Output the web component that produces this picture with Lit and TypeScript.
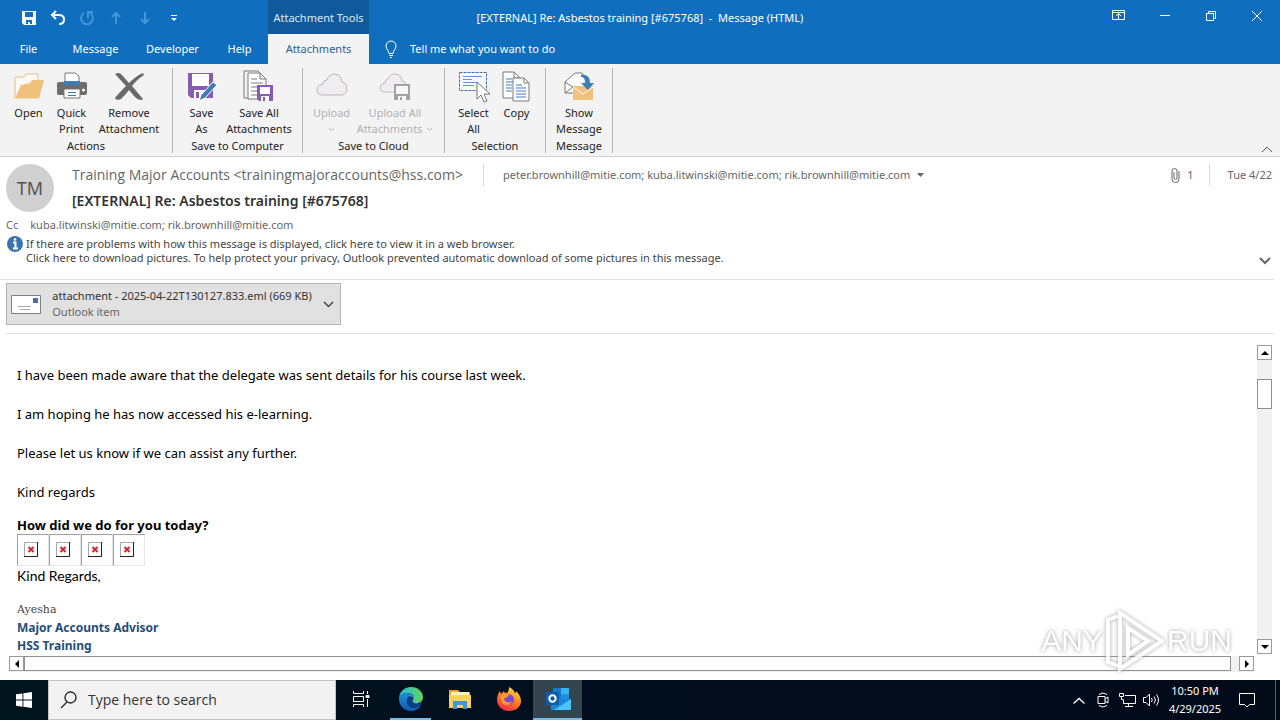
import { LitElement, html, svg, css, nothing } from "lit";
import { customElement } from "lit/decorators.js";

const page = svg`<path d="M1 1h11l6 6v20H1z" fill="#fff" stroke="#7a7a7a"/><path d="M12 1v6h6" fill="none" stroke="#7a7a7a"/>`;

const icons: Record<string, unknown> = {
  open: svg`<path d="M2 28V7h9l2-3h12v9" fill="#fdf9f2" stroke="#e6c08a"/><path d="M2 28.500 8 15l9-2 2-3h12l-5 18.500z" fill="#f0c27b"/>`,
  print: svg`<path d="M3 12h26q2 0 2 2v9q0 2-2 2H3q-2 0-2-2v-9q0-2 2-2z" fill="#6d6d6d"/><path d="M9 3h10l4 3v8H9z" fill="#fff" stroke="#777"/><path d="M8 11h16v4H8z" fill="#3e7cb8"/><path d="M8 19h16v9H8z" fill="#fff" stroke="#777"/><path d="M12 22.500h8M12 25.500h8" stroke="#3e7cb8"/><circle cx="27.500" cy="20" r="1.500" fill="#fff"/>`,
  remove: svg`<path d="M2 4c3-2 5-1 7 1l7 8c4-4 9-8 14-10l1 2c-5 3-9 7-12 11l11 13-1 1c-4 0-6-2-8-4l-5-6c-3 4-6 7-8 9-2 1-6 1-6-1 3-4 7-8 11-12z" fill="#6a6a6a"/>`,
  save: svg`<path d="M2 3h25v25H5l-3-3z" fill="#8a5bb0"/><path d="M6 4h17v12H6z" fill="#fff"/><path d="M8 20h12v8H8z" fill="#fff"/><path d="M10 22h3v6h-3z" fill="#8a5bb0"/><path d="m13 31 2-6L27 12l4 3-12 13z" fill="#3e7cb8" stroke="#fff"/>`,
  saveAll: svg`<path d="M5 28H1V1h14l3 3" fill="none" stroke="#7a7a7a"/><path d="M5 3h12l6 6v20H5z" fill="#fff" stroke="#7a7a7a"/><path d="M17 3v6h6M8 9h6M8 13h12M8 17h8M8 21h6M8 25h6" fill="none" stroke="#7a7a7a"/><path d="M14 15h16v16H16l-2-2z" fill="#8a5bb0"/><path d="M17 17h10v7H17zM18 26h8v5h-8z" fill="#fff"/><path d="M20 27h2v4h-2z" fill="#8a5bb0"/>`,
  cloud: svg`<path d="M7 25q-6 0-6-5t6-6q0-4 4-4 2-6 7-6 7 0 8 8 5 1 5 6.500T26 25z" fill="#f0edf2" stroke="#b9b5bc"/>`,
  cloudAll: svg`<path d="M6 22q-5 0-5-4t5-5q0-4 3-4 2-5 7-5 6 0 7 7 5 1 5 6" fill="#f0edf2" stroke="#bdb9c0"/><path d="M6 22h10" stroke="#bdb9c0"/><path d="M15 14h16v16H15z" fill="#a3a3a3"/><path d="M17 16h12v8H17zM19 26h8v4h-8z" fill="#f6f6f6"/><path d="M21 27h2v3h-2z" fill="#a3a3a3"/>`,
  select: svg`<path d="M1.500 2.500h27v18h-27z" fill="#f6fafd" stroke="#41719c" stroke-dasharray="3 1"/><path d="M5 6.500h19M5 9.500h9M5 12.500h14M5 15.500h11" stroke="#5b9bd5"/><path d="M19 12v17l4-4 3 7 3-1-3-7h6z" fill="#fff" stroke="#777"/>`,
  copy: svg`<g transform="translate(1 1)">${page}<path d="M4 8h6M4 11h8M4 14h6M4 17h6M4 20h6" stroke="#3e7cb8"/></g><g transform="translate(11 7)"><path d="M1 1h11l5 5v18H1z" fill="#fff" stroke="#7a7a7a"/><path d="M12 1v5h5" fill="none" stroke="#7a7a7a"/><path d="M4 8h6M4 11h10M4 14h10M4 17h10M4 20h10" stroke="#3e7cb8"/></g>`,
  show: svg`<path d="M2 12 12 3h7l4 6v14H2z" fill="#fff" stroke="#777"/><path d="m2 12 8 5-8 6" fill="none" stroke="#777"/><path d="M10 16h20v14H10z" fill="#f0c27b"/><path d="m10 17 10 7 10-7" fill="none" stroke="#fff"/><path d="M18 5c7-1 9 3 9 8h4l-6 7-7-7h4c0-4-1-6-4-6z" fill="#3e7cb8"/>`,
};

interface Command { label: string[]; icon: string; size: string; off?: boolean; arrow?: boolean }
const groups: { name: string; items: Command[] }[] = [
  { name: "Actions", items: [
    { label: ["Open"], icon: "open", size: "sm" },
    { label: ["Quick", "Print"], icon: "print", size: "sm" },
    { label: ["Remove", "Attachment"], icon: "remove", size: "md" } ] },
  { name: "Save to Computer", items: [
    { label: ["Save", "As"], icon: "save", size: "sm" },
    { label: ["Save All", "Attachments"], icon: "saveAll", size: "md" } ] },
  { name: "Save to Cloud", items: [
    { label: ["Upload", ""], icon: "cloud", size: "sm", off: true, arrow: true },
    { label: ["Upload All", "Attachments"], icon: "cloudAll", size: "lg", off: true, arrow: true } ] },
  { name: "Selection", items: [
    { label: ["Select", "All"], icon: "select", size: "sm" },
    { label: ["Copy"], icon: "copy", size: "sm" } ] },
  { name: "Message", items: [
    { label: ["Show", "Message"], icon: "show", size: "ms" } ] },
];

const quick = [
  { name: "Save", dim: false, art: svg`<path d="M1 1h14v14H3l-2-2z" fill="#fff"/><path d="M4 2h8v5H4zM5 10h6v4H9v-2H7v2H5z" fill="#106ebe"/>` },
  { name: "Undo", dim: false, art: svg`<path d="M6 1 2 5l4 4M2 5h7q5 0 5 4.500T9 14" fill="none" stroke="#fff" stroke-width="2"/>` },
  { name: "Redo", dim: true, art: svg`<path d="M5 3a6 6 0 1 0 6 0M9 8V2h5" fill="none" stroke="#8fd0f5" stroke-width="2"/>` },
  { name: "Previous item", dim: true, art: svg`<path d="M8 14V3M4 7l4-4 4 4" fill="none" stroke="#8fd0f5" stroke-width="2"/>` },
  { name: "Next item", dim: true, art: svg`<path d="M8 2v11M4 9l4 4 4-4" fill="none" stroke="#8fd0f5" stroke-width="2"/>` },
  { name: "Customize toolbar", dim: false, art: svg`<path d="M5 5.500h6" stroke="#fff"/><path d="M5 8h6l-3 3z" fill="#fff"/>` },
];

const windowButtons = [
  { name: "Ribbon display options", art: svg`<path d="M1.500 2.500h12v9h-12zM1.500 4.500h12M7.500 11V6M5 8l2.500-2.500L10 8" />` },
  { name: "Minimize", art: svg`<path d="M3 7.500h10"/>` },
  { name: "Restore", art: svg`<path d="M3.500 5.500h7v7h-7zM5.500 5V3.500h7v7H11"/>` },
  { name: "Close", art: svg`<path d="m3 3 10 10M13 3 3 13"/>` },
];

const arrow = (d: string) => html`<svg width="8" height="8" viewBox="0 0 8 8" aria-hidden="true"><path d=${d} fill="#000"/></svg>`;

@customElement("app-root")
export class AppRoot extends LitElement {
  static styles = css`
    :host { display: flex; flex-direction: column; height: 100vh; position: relative; overflow: hidden; background: #fff; color: #222;
      font: 11px/16px "Noto Sans", "Open Sans", sans-serif; }
    * { box-sizing: border-box; }
    button, input { font: inherit; color: inherit; background: none; border: 0; padding: 0; margin: 0; border-radius: 0; outline: 0; }
    button { display: flex; align-items: center; justify-content: center; }
    svg { display: block; flex: none; }
    p, h1 { margin: 0; font: inherit; }

    .title-bar { display: grid; grid-template-columns: 268px 101px 1fr auto; height: 34px; background: #106ebe; color: #fff; flex: none; }
    .title-bar > * { grid-row: 1; }
    .quick { display: flex; padding-left: 14px; grid-column: 1; }
    .quick button { width: 29px; }
    .dim { opacity: .4; }
    .context { grid-column: 2; background: #10599a; display: flex; align-items: center; justify-content: center; white-space: nowrap; color: #d8ecfb; }
    .window-title { grid-column: 1 / -1; text-align: center; line-height: 36px; }
    .window-buttons { grid-column: 4; display: flex; height: 31px; z-index: 1; }
    .window-buttons button { width: 46px; }

    .tabs { display: flex; height: 30px; background: #106ebe; color: #fff; flex: none; }
    .tabs button { width: 77px; }
    .tabs .narrow { width: 57px; }
    .tabs .active { width: 101px; background: #f3f3f3; color: #2b5f97; }
    .tell { display: flex; align-items: center; gap: 12px; padding-left: 15px; flex: 1; }
    .tell input { flex: 1; }
    input::placeholder { color: inherit; opacity: 1; }

    .ribbon { display: flex; align-items: flex-start; height: 93px; background: #f3f3f3; border-bottom: 1px solid #d2d2d2; flex: none; padding-top: 4px; }
    .group { display: flex; flex-direction: column; height: 85px; padding: 2px 7px 0; border-right: 1px solid #b4b4b4; text-align: center; line-height: 14px; }
    .commands { display: flex; flex: 1; }
    .commands button { flex-direction: column; justify-content: flex-start; white-space: nowrap; }
    .commands svg { margin-bottom: 1px; }
    .sm { width: 43px; } .ms { width: 52px; } .md { width: 72px; } .lg { width: 84px; }
    .off { color: #b1b1b1; }
    .line { display: flex; align-items: center; gap: 4px; height: 16px; }
    .line svg { margin: 0; }
    .collapse { margin: auto 6px 1px auto; height: 12px; }

    .header { padding: 6px 2px 14px 6px; border-bottom: 1px solid #e1e1e1; flex: none; margin-right: 6px; color: #666; }
    .identity { display: flex; gap: 18px; }
    .avatar { width: 48px; height: 48px; margin-top: 1px; border-radius: 50%; background: #d0d0d0; color: #555; font-size: 18px; line-height: 49px; text-align: center; }
    .who { flex: 1; }
    .people { display: flex; align-items: center; height: 24px; }
    .from { font: 14px/24px "Open Sans", "Noto Sans", sans-serif; padding-right: 20px; }
    .bar { width: 1px; height: 22px; background: #dadada; }
    .to { padding-left: 19px; display: flex; align-items: center; gap: 7px; }
    .stats { margin-left: auto; display: flex; align-items: center; gap: 7px; }
    .stats .bar { margin: 0 11px 0 8px; }
    .subject { font-size: 14px; line-height: 28px; font-weight: 600; color: #333; }
    .cc { display: flex; gap: 12px; line-height: 20px; }
    .info { display: flex; gap: 3px; color: #444; }
    .info p { line-height: 14px; padding-top: 2px; flex: 1; }
    .info button { align-self: flex-end; }

    .attachments { padding: 3px 0 8px; margin: 0 6px; border-bottom: 1px solid #e1e1e1; flex: none; }
    .attachments button { width: 335px; height: 42px; background: #e1e1e1; border: 1px solid #b5b5b5; padding: 0 7px 0 5px; text-align: left; gap: 11px; color: #333; }
    .file { flex: 1; white-space: nowrap; }
    .kind { display: block; color: #666; }

    .viewer { flex: 1; min-height: 0; display: grid; grid-template-columns: 1fr 16px; grid-template-rows: 1fr 16px; column-gap: 2px; row-gap: 2px; padding: 11px 7px 8px 9px; }
    .message { overflow: hidden; padding: 20px 8px 0; color: #000; font-size: 13px; line-height: 20px; min-height: 0; }
    .message p { margin-bottom: 19px; }
    .message .ask { font: bold 13px/17px "Noto Sans", "Open Sans", sans-serif; margin: -4px 0 0; }
    .blocked { display: flex; }
    .blocked span { width: 32px; height: 32px; border: 1px solid #e6e6e6; border-left-color: #a0a0a0; border-top-color: #a0a0a0; display: flex; align-items: center; padding-left: 5px; }
    .message .regards { font: 14px/20px Lato, sans-serif; margin-bottom: 15px; }
    .message .name { font: 11px/18px "DejaVu Serif", serif; color: #444; margin: 0; }
    .message .role { font-weight: bold; font-size: 12px; line-height: 18px; color: #1f4e79; margin: 0; }
    .vbar { display: flex; flex-direction: column; background: #f1f1f1; width: 15px; }
    .hbar { display: flex; background: #f1f1f1; margin-right: 1px; height: 16px; }
    .step { width: 15px; height: 15px; border: 1px solid #9a9a9a; background: #fff; flex: none; }
    .vbar .thumb { height: 30px; width: 15px; margin: 19px 0 auto; border: 1px solid #8f8f8f; background: #fff; }
    .hbar .thumb { flex: 1; border: 1px solid #8f8f8f; background: #fff; height: 15px; margin-right: 8px; }

    .mark { position: absolute; right: 48px; bottom: 48px; display: flex; align-items: center; gap: 3px; color: #fff; opacity: .85; font: 30px/60px "Liberation Sans", sans-serif; text-shadow: 0 0 4px #888; pointer-events: none; }
    .mark svg { filter: drop-shadow(0 0 2px #999); }

    .taskbar { display: flex; height: 40px; background: linear-gradient(90deg, #00151d, #020d1d 50%, #020a18); color: #fff; flex: none; }
    .app { width: 49px; border-bottom: 2px solid transparent; }
    .view { width: 50px; }
    .running { border-bottom-color: #76b9ed; }
    .slim { width: 41px; margin: 0 4px; }
    .current { background: #33454e; }
    .search { width: 288px; display: flex; align-items: center; gap: 11px; padding-left: 11px; background: #f2f2f2; border: 1px solid #c4c4c4; color: #333; font: 14px/20px "Open Sans", "Noto Sans", sans-serif; }
    .search input { flex: 1; min-width: 0; }
    .start { width: 48px; }
    .tray { margin-left: auto; display: flex; }
    .tray button { width: 24px; }
    .tray .clock { width: 64px; flex-direction: column; line-height: 18px; white-space: nowrap; }
    .tray .notes { width: 40px; }
    .edge { width: 5px; margin-left: 8px; border-left: 1px solid #56606a; }
  `;

  private command(c: Command) {
    const chev = html`<svg width="7" height="5" viewBox="0 0 7 5" aria-hidden="true"><path d="m1 1 2.500 2.500L6 1" fill="none" stroke="#b1b1b1"/></svg>`;
    return html`<button class="${c.size} ${c.off ? "off" : ""}">
      <svg width="32" height="34" viewBox="0 0 32 34" aria-hidden="true">${icons[c.icon]}</svg>
      ${c.label.map((t, i) => html`<span class="line">${t ? html`<span>${t}</span>` : nothing}${c.arrow && i === 1 ? chev : nothing}</span>`)}
    </button>`;
  }

  render() {
    return html`
      <div class="title-bar">
        <h1 class="window-title">[EXTERNAL] Re: Asbestos training [#675768]&nbsp; -&nbsp; Message (HTML)</h1>
        <div class="quick">${quick.map((q) => html`<button class=${q.dim ? "dim" : ""} aria-label=${q.name}><svg width="16" height="16" viewBox="0 0 16 16">${q.art}</svg></button>`)}</div>
        <div class="context">Attachment Tools</div>
        <div class="window-buttons">${windowButtons.map((b) => html`<button aria-label=${b.name}><svg width="16" height="16" viewBox="0 0 16 16" fill="none" stroke="#fff">${b.art}</svg></button>`)}</div>
      </div>
      <nav class="tabs">
        <button class="narrow">File</button><button>Message</button><button>Developer</button><button class="narrow">Help</button><button class="active">Attachments</button>
        <label class="tell">
          <svg width="14" height="18" viewBox="0 0 14 18" fill="none" stroke="#fff"><path d="M5 13.500c0-3-3-4-3-7.500a5 5 0 0 1 10 0c0 3.500-3 4.500-3 7.500zM5 15.500h4M6 17.500h2"/></svg>
          <input aria-label="Tell me what you want to do" placeholder="Tell me what you want to do">
        </label>
      </nav>
      <div class="ribbon">
        ${groups.map((g) => html`<section class="group"><div class="commands">${g.items.map((c) => this.command(c))}</div><div>${g.name}</div></section>`)}
        <button class="collapse" aria-label="Collapse the ribbon"><svg width="14" height="8" viewBox="0 0 14 8"><path d="m2 7 5-5 5 5" fill="none" stroke="#555"/></svg></button>
      </div>
      <header class="header">
        <div class="identity">
          <div class="avatar">TM</div>
          <div class="who">
            <div class="people">
              <span class="from">Training Major Accounts &lt;trainingmajoraccounts@hss.com&gt;</span>
              <span class="bar"></span>
              <span class="to"><span>peter.brownhill@mitie.com; kuba.litwinski@mitie.com; rik.brownhill@mitie.com</span><svg width="7" height="4" viewBox="0 0 7 4"><path d="M0 0h7L3.500 4z" fill="#666"/></svg></span>
              <span class="stats"><svg width="9" height="15" viewBox="0 0 9 15"><path d="M3 4v6q0 1.500 1.500 1.500T6 10V3q0-2.500-2.500-2.500T1 3v8q0 3.500 3.500 3.500T8 11V3" fill="none" stroke="#666"/></svg><span>1</span><span class="bar"></span><span>Tue 4/22</span></span>
            </div>
            <div class="subject">[EXTERNAL] Re: Asbestos training [#675768]</div>
          </div>
        </div>
        <div class="cc"><span>Cc</span><span>kuba.litwinski@mitie.com; rik.brownhill@mitie.com</span></div>
        <div class="info">
          <svg width="17" height="18" viewBox="0 0 17 18"><circle cx="9" cy="9" r="8" fill="#3c74b0"/><path d="M7 7.500h2.500V13M7 13.500h5" fill="none" stroke="#fff" stroke-width="2"/><circle cx="9" cy="4.500" r="1.300" fill="#fff"/></svg>
          <p>If there are problems with how this message is displayed, click here to view it in a web browser.<br>Click here to download pictures. To help protect your privacy, Outlook prevented automatic download of some pictures in this message.</p>
          <button aria-label="Expand header"><svg width="14" height="8" viewBox="0 0 14 8"><path d="m2 1 5 5 5-5" fill="none" stroke="#666" stroke-width="2"/></svg></button>
        </div>
      </header>
      <div class="attachments">
        <button>
          <svg width="30" height="19" viewBox="0 0 30 19"><path d="M.5.500h29v18H.500z" fill="#fff" stroke="#7d7d8c"/><path d="M22 3h5v5h-5z" fill="#4a6ea9"/><path d="M7 11.500h13M9 14.500h10" stroke="#aaa"/></svg>
          <span class="file">attachment - 2025-04-22T130127.833.eml (669 KB)<span class="kind">Outlook item</span></span>
          <svg width="11" height="7" viewBox="0 0 11 7"><path d="m1 1 4.500 4.500L10 1" fill="none" stroke="#444" stroke-width="1.500"/></svg>
        </button>
      </div>
      <main class="viewer">
        <article class="message">
          <p>I have been made aware that the delegate was sent details for his course last week.</p>
          <p>I am hoping he has now accessed his e-learning.</p>
          <p>Please let us know if we can assist any further.</p>
          <p>Kind regards</p>
          <p class="ask">How did we do for you today?</p>
          <div class="blocked">${[1, 2, 3, 4].map(() => html`<span><svg width="16" height="16" viewBox="0 0 16 16"><path d="M1.500 .5h13v14h-13z" fill="#fff" stroke="#aaa"/><path d="M1 14.500h13.500V0" fill="none" stroke="#222"/><path d="m5.500 5 5 5M10.500 5l-5 5" stroke="#d22" stroke-width="2"/></svg></span>`)}</div>
          <p class="regards">Kind Regards,</p>
          <p class="name">Ayesha</p>
          <p class="role">Major Accounts Advisor</p>
          <p class="role">HSS Training</p>
        </article>
        <div class="vbar">
          <button class="step" aria-label="Scroll up">${arrow("M0 6h8L4 2z")}</button><div class="thumb"></div><button class="step" aria-label="Scroll down">${arrow("M0 2h8L4 6z")}</button>
        </div>
        <div class="hbar">
          <button class="step" aria-label="Scroll left">${arrow("M6 0v8L2 4z")}</button><div class="thumb"></div><button class="step" aria-label="Scroll right">${arrow("M2 0v8l4-4z")}</button>
        </div>
      </main>
      <footer class="taskbar">
        <button class="start" aria-label="Start"><svg width="16" height="16" viewBox="0 0 16 16"><path d="M0 2.300 6.500 1.400v6.200H0zM7.400 1.300 16 0v7.600H7.400zM0 8.400h6.500v6.300L0 13.800zM7.400 8.400H16V16l-8.600-1.200z" fill="#fff"/></svg></button>
        <label class="search"><svg width="17" height="18" viewBox="0 0 17 18"><circle cx="10.500" cy="6.500" r="5.500" fill="none" stroke="#222" stroke-width="1.300"/><path d="m7 11-6 6" stroke="#222" stroke-width="1.300"/></svg><input aria-label="Type here to search" placeholder="Type here to search"></label>
        <button class="app view" aria-label="Task view"><svg width="18" height="18" viewBox="0 0 18 18" fill="none" stroke="#fff"><path d="M1.500 1v2.500h10V1M1.500 6.500h10v5h-10zM1.500 17v-2.500h10V17M15.500 1v3M15.500 9v8"/><path d="M14 5.500h3v2h-3z" fill="#fff"/></svg></button>
        <button class="app running slim" aria-label="Edge"><svg width="26" height="26" viewBox="0 0 26 26"><defs><linearGradient id="e1"><stop stop-color="#2cb6e0"/><stop offset="1" stop-color="#5fd65a"/></linearGradient><linearGradient id="e2" x2="0" y2="1"><stop stop-color="#1b8fd8"/><stop offset="1" stop-color="#1259b0"/></linearGradient></defs><path d="M1 13C1 6 6 1 13 1s12 5 12 10c0 4-3 6-6 6s-4-1-4-2c0-1 1-1 1-3 0-3-3-5-7-5S1 10 1 13z" fill="url(#e1)"/><path d="M1 13c0-4 4-6 8-6 3 0 5 1 6 3-3-1-6 1-6 5 0 5 5 8 10 6 2-1 3-1 4-2-2 4-6 6-10 6-7 0-12-5-12-12z" fill="url(#e2)"/><path d="M9 15c0-3 2-5 4-5s3 1 3 2-1 2-1 3 1 2 4 2c2 0 4-1 5-2 0 2-1 4-2 5-6 4-13 1-13-5z" fill="#0c3f80"/><path d="M12 10c2 0 4 0 4 2s-1 2-1 3 1 2 4 2" fill="none" stroke="#b7ecff" stroke-width=".6"/></svg></button>
        <button class="app" aria-label="File Explorer"><svg width="24" height="22" viewBox="0 0 24 22"><path d="M1 2h9l2 2h10v16H1z" fill="#e9a820"/><path d="M3 4h18v4H3z" fill="#fff3c4"/><path d="M1 7h22v13H1z" fill="#fbd35c"/><path d="M5 21v-8h14v8h-4v-4H9v4z" fill="#3f96dc"/></svg></button>
        <button class="app" aria-label="Firefox"><svg width="26" height="26" viewBox="0 0 26 26"><defs><linearGradient id="f1" x1=".8" x2=".3" y2="1"><stop stop-color="#ffe84a"/><stop offset=".45" stop-color="#ff8a1e"/><stop offset="1" stop-color="#f2264d"/></linearGradient></defs><path d="M13 25C6 25 1 20 1 14c0-4 1-6 3-9l1 3 3-3c0 1 1 2 2 2 2 0 3-3 3-6 4 2 5 4 6 6 1 0 1-1 1-2 3 3 5 6 5 10 0 6-5 10-12 10z" fill="url(#f1)"/><circle cx="13" cy="13.500" r="5" fill="#7846d9"/><path d="M5 9c3-2 6 0 8 0-1 3-4 2-5 4 1 4 6 4 8 2-1 5-10 6-11-1-1-2-1-3 0-5z" fill="#ff9a22"/></svg></button>
        <button class="app running current" aria-label="Outlook"><svg width="26" height="26" viewBox="0 0 26 26"><path d="M8 2h16v13H8z" fill="#1379c9"/><path d="M16 2h8v6h-8z" fill="#35b4f0"/><path d="M16 8h8v6h-8z" fill="#1e90e0"/><path d="M6 13h20v10q0 1-1 1H7q-1 0-1-1z" fill="#1a86d8"/><path d="m26 13-17 11h16q1 0 1-1z" fill="#4cc4f5"/><path d="M1 6h13v13H1z" fill="#0b5cad"/><circle cx="7.500" cy="12.500" r="3.200" fill="none" stroke="#fff" stroke-width="2"/></svg></button>
        <div class="tray">
          <button aria-label="Hidden icons"><svg width="14" height="9" viewBox="0 0 14 9"><path d="m1.500 7.500 5.500-5 5.500 5" fill="none" stroke="#fff" stroke-width="1.300"/></svg></button>
          <button aria-label="Meet now"><svg width="12" height="18" viewBox="0 0 12 18" fill="none" stroke="#fff"><path d="M1 5.500h7v7H1zM8 8l3-2v6l-3-2M2 3.500q4-3 8 0M2 14.500q4 3 8 0"/></svg></button>
          <button aria-label="Network"><svg width="17" height="16" viewBox="0 0 17 16" fill="none" stroke="#fff"><path d="M6 3.500h10.500v8H4.500V8M9.500 12v2.500M6 14.500h8M.5 1.500h4v3h-4zM2.500 5v2.500h2"/></svg></button>
          <button aria-label="Volume"><svg width="17" height="14" viewBox="0 0 17 14" fill="none" stroke="#fff"><path d="M.5 4.500H3l3.500-3.500v12L3 9.500H.500zM8.500 5q1.500 2 0 4M11 3.500q3 3.500 0 7M13.500 1.500q4 5.500 0 11"/></svg></button>
          <button class="clock"><span>10:50 PM</span><span>4/29/2025</span></button>
          <button class="notes" aria-label="Notifications"><svg width="18" height="18" viewBox="0 0 18 18"><path d="M1.500 2.500h15v11h-5L9 16l-2.500-2.500h-5z" fill="none" stroke="#fff"/></svg></button>
          <span class="edge"></span>
        </div>
      </footer>
      <div class="mark" aria-hidden="true"><span>ANY</span><svg width="58" height="62" viewBox="0 0 58 62" fill="none" stroke="#fff" stroke-width="4"><path d="M12 6 2 10v42l10 4"/><path d="M14 3v56l42-28zM22 18v27l20-14z"/></svg><span>RUN</span></div>
    `;
  }
}
